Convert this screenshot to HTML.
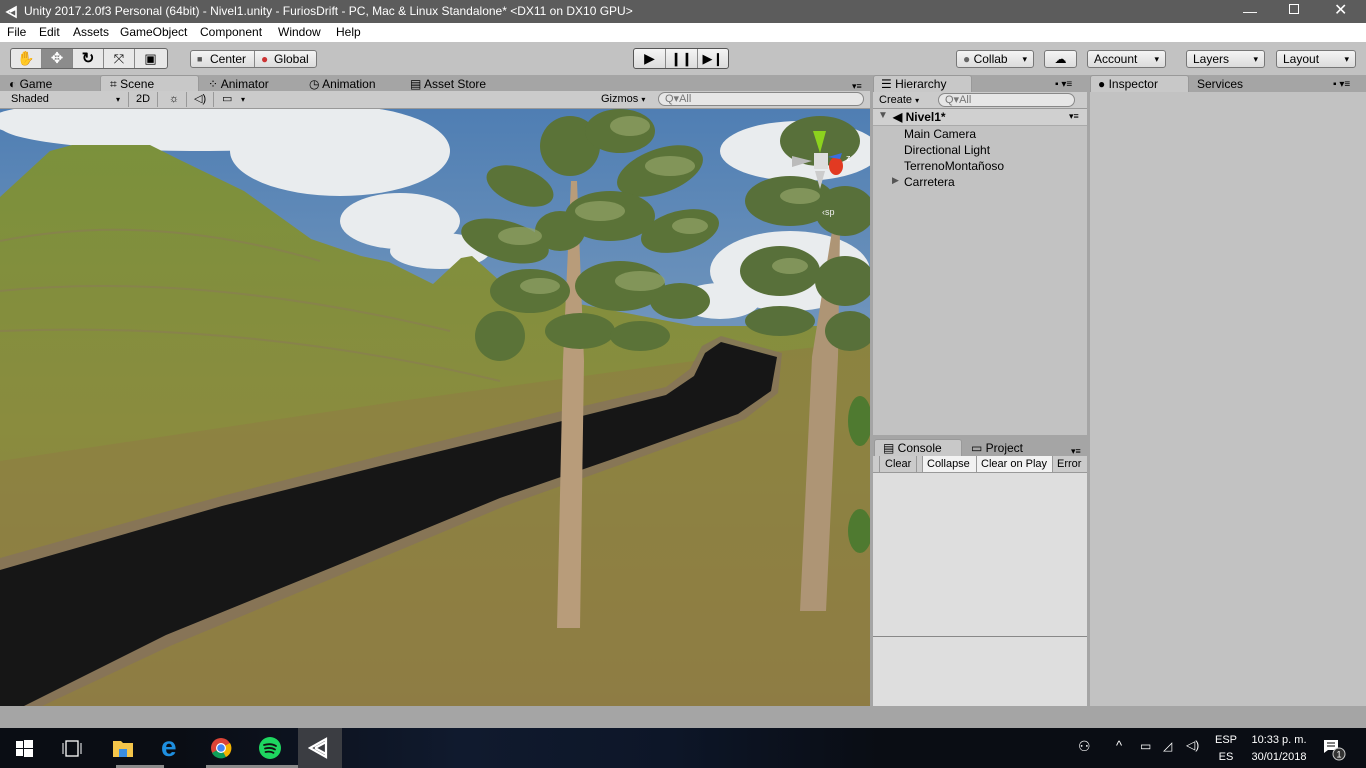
<!DOCTYPE html>
<html><head><meta charset="utf-8"><style>
*{box-sizing:border-box;margin:0;padding:0}
body{width:1366px;height:768px;overflow:hidden;position:relative;font-family:"Liberation Sans",sans-serif;font-size:12px;color:#000;background:#a5a5a5}
.abs{position:absolute}
.btn{position:absolute;border:1px solid #777;border-radius:3px;background:linear-gradient(#f4f4f4,#dcdcdc);font-size:12px;line-height:17px;padding-left:6px}
.tab{position:absolute;font-size:12px;line-height:16px}
.dd::after{content:"▾";position:absolute;right:6px;font-size:9px}
</style></head><body>
<!-- title -->
<div class="abs" style="left:0;top:0;width:1366px;height:23px;background:#5c5c5c;color:#fff;font-size:12px;line-height:23px;padding-left:24px">Unity 2017.2.0f3 Personal (64bit) - Nivel1.unity - FuriosDrift - PC, Mac &amp; Linux Standalone* &lt;DX11 on DX10 GPU&gt;</div>
<svg class="abs" style="left:5px;top:5px" width="14" height="14" viewBox="0 0 14 14"><path d="M2 7 L11 2 L11 12 Z M5 7 L11 4" stroke="#fff" stroke-width="1.6" fill="none"/></svg>
<div class="abs" style="left:1243px;top:0;color:#fff;font-size:14px;line-height:22px">—</div>
<div class="abs" style="left:1289px;top:4px;width:10px;height:10px;border:1px solid #fff"></div>
<div class="abs" style="left:1334px;top:0;color:#fff;font-size:16px;line-height:22px">✕</div>
<!-- menu -->
<div class="abs" style="left:0;top:23px;width:1366px;height:19px;background:#fff;font-size:12px;line-height:19px">
<span class="abs" style="left:7px">File</span><span class="abs" style="left:39px">Edit</span><span class="abs" style="left:73px">Assets</span><span class="abs" style="left:120px">GameObject</span><span class="abs" style="left:200px">Component</span><span class="abs" style="left:278px">Window</span><span class="abs" style="left:336px">Help</span></div>
<!-- toolbar -->
<div class="abs" style="left:0;top:42px;width:1366px;height:33px;background:#c2c2c2"></div>
<div class="abs" style="left:10px;top:48px;width:158px;height:21px;border:1px solid #666;border-radius:3px;background:#e8e8e8;display:flex">
<div style="width:31px;border-right:1px solid #888;text-align:center;line-height:19px;font-size:14px">✋</div>
<div style="width:31px;border-right:1px solid #888;background:#8c8c8c;text-align:center;line-height:19px;font-size:15px;color:#fff">✥</div>
<div style="width:31px;border-right:1px solid #888;text-align:center;line-height:19px;font-size:15px;font-weight:bold">↻</div>
<div style="width:31px;border-right:1px solid #888;text-align:center;line-height:19px;font-size:13px">⤧</div>
<div style="width:31px;text-align:center;line-height:19px;font-size:13px">▣</div></div>
<div class="abs" style="left:190px;top:50px;width:127px;height:18px;border:1px solid #777;border-radius:3px;background:linear-gradient(#f4f4f4,#dcdcdc);font-size:12px;line-height:16px">
<span class="abs" style="left:6px;color:#555;font-size:9px">■</span><span class="abs" style="left:19px">Center</span><span class="abs" style="left:63px;top:0;width:1px;height:16px;background:#888"></span><span class="abs" style="left:70px;color:#c33">●</span><span class="abs" style="left:83px">Global</span></div>
<div class="abs" style="left:633px;top:48px;width:96px;height:21px;border:1px solid #555;border-radius:3px;background:linear-gradient(#f4f4f4,#dcdcdc);display:flex">
<div style="width:32px;border-right:1px solid #888;text-align:center;line-height:19px;font-size:14px">▶</div>
<div style="width:32px;border-right:1px solid #888;text-align:center;line-height:19px;font-size:13px;font-weight:bold">❙❙</div>
<div style="width:30px;text-align:center;line-height:19px;font-size:13px">▶❙</div></div>
<div class="btn dd" style="left:956px;top:50px;width:78px;height:18px"><span style="color:#666">●</span> Collab</div>
<div class="btn" style="left:1044px;top:50px;width:33px;height:18px;text-align:center;padding:0">☁</div>
<div class="btn dd" style="left:1087px;top:50px;width:79px;height:18px">Account</div>
<div class="btn dd" style="left:1186px;top:50px;width:79px;height:18px">Layers</div>
<div class="btn dd" style="left:1276px;top:50px;width:80px;height:18px">Layout</div>
<!-- scene tabs -->
<div class="abs" style="left:0;top:75px;width:870px;height:16px;background:#a5a5a5"></div>
<div class="tab" style="left:9px;top:76px">◐ Game</div>
<div class="abs" style="left:100px;top:75px;width:99px;height:17px;background:#c8c8c8;border:1px solid #999;border-bottom:none;border-radius:3px 3px 0 0"></div>
<div class="tab" style="left:110px;top:76px">⌗ Scene</div>
<div class="tab" style="left:208px;top:76px">⁘ Animator</div>
<div class="tab" style="left:309px;top:76px">◷ Animation</div>
<div class="tab" style="left:410px;top:76px">▤ Asset Store</div>
<div class="tab" style="left:852px;top:78px;font-size:9px">▾≡</div>
<div class="abs" style="left:0;top:91px;width:870px;height:18px;background:#cbcbcb;border-bottom:1px solid #999;font-size:11px;line-height:17px">
<span class="abs" style="left:11px">Shaded</span><span class="abs" style="left:116px;font-size:8px">▾</span><span class="abs" style="left:128px;top:1px;width:1px;height:15px;background:#999"></span><span class="abs" style="left:136px">2D</span><span class="abs" style="left:157px;top:1px;width:1px;height:15px;background:#999"></span><span class="abs" style="left:169px">☼</span><span class="abs" style="left:186px;top:1px;width:1px;height:15px;background:#999"></span><span class="abs" style="left:194px">◁)</span><span class="abs" style="left:213px;top:1px;width:1px;height:15px;background:#999"></span><span class="abs" style="left:222px">▭</span><span class="abs" style="left:241px;font-size:8px">▾</span>
<span class="abs" style="left:601px">Gizmos <span style="font-size:8px">▾</span></span>
<span class="abs" style="left:658px;top:1px;width:206px;height:14px;border:1px solid #888;border-radius:8px;background:#e6e6e6;line-height:12px;padding-left:6px;color:#777">Q▾All</span></div>
<!-- scene -->
<svg class="abs" style="left:0;top:109px" width="870" height="597" viewBox="0 108 870 597">
<defs>
<linearGradient id="sky" x1="0" y1="0" x2="0" y2="1"><stop offset="0" stop-color="#4f7eb3"/><stop offset="1" stop-color="#a8bccc"/></linearGradient>
<linearGradient id="hill" x1="0" y1="0" x2="0" y2="1"><stop offset="0" stop-color="#7b913c"/><stop offset="0.5" stop-color="#8a8c3e"/><stop offset="1" stop-color="#8d7d45"/></linearGradient>
</defs>
<rect x="0" y="108" width="870" height="597" fill="url(#sky)"/>
<g fill="#e9ecee">
<ellipse cx="200" cy="125" rx="200" ry="25"/><ellipse cx="340" cy="150" rx="110" ry="45"/><ellipse cx="400" cy="220" rx="60" ry="28"/><ellipse cx="440" cy="250" rx="50" ry="18"/><ellipse cx="800" cy="150" rx="80" ry="30"/><ellipse cx="790" cy="270" rx="80" ry="40"/><ellipse cx="720" cy="300" rx="40" ry="18"/><ellipse cx="40" cy="120" rx="50" ry="14"/>
</g>
<path d="M0 196 L50 150 L72 144 L150 144 L178 158 L244 190 L311 238 L361 255 L389 261 L433 283 L461 257 L472 255 L511 290 L694 325 L870 325 L870 705 L0 705 Z" fill="url(#hill)"/>
<path d="M0 240 Q150 210 320 260 M0 290 Q200 270 450 330 M0 330 Q250 320 500 380" stroke="#8b7c55" stroke-width="2" fill="none" opacity="0.6"/>
<path d="M0 460 L400 400 L694 360 L870 340 L870 705 L0 705Z" fill="#8f7c44" opacity="0.55"/>
<path d="M0 557 L222 495 L388 453 L566 409 L666 386 L690 368 L702 345 L721 335 L782 352 L778 392 L745 418 L614 466 L505 505 L338 575 L170 645 L40 706 L0 706Z" fill="#857060" opacity="0.7"/>
<path d="M0 569 L222 505 L388 463 L566 419 L666 394 L694 375 L705 352 L721 341 L777 356 L771 390 L738 413 L610 459 L500 497 L333 566 L166 634 L22 706 L0 706Z" fill="#161616"/>
<!-- tree 1 trunk -->
<path d="M557 627 L563 360 L571 180 L577 180 L584 360 L580 627Z" fill="#b89c7a"/>
<!-- tree 1 foliage -->
<g fill="#5b7338">
<ellipse cx="570" cy="145" rx="30" ry="30"/><ellipse cx="620" cy="130" rx="35" ry="22"/><ellipse cx="660" cy="170" rx="45" ry="22" transform="rotate(-20 660 170)"/><ellipse cx="520" cy="185" rx="35" ry="18" transform="rotate(20 520 185)"/>
<ellipse cx="610" cy="215" rx="45" ry="25"/><ellipse cx="680" cy="230" rx="40" ry="20" transform="rotate(-15 680 230)"/><ellipse cx="505" cy="240" rx="45" ry="20" transform="rotate(15 505 240)"/><ellipse cx="560" cy="230" rx="25" ry="20"/>
<ellipse cx="530" cy="290" rx="40" ry="22"/><ellipse cx="620" cy="285" rx="45" ry="25"/><ellipse cx="680" cy="300" rx="30" ry="18"/><ellipse cx="500" cy="335" rx="25" ry="25"/><ellipse cx="580" cy="330" rx="35" ry="18"/><ellipse cx="640" cy="335" rx="30" ry="15"/>
</g>
<g fill="#93a468" opacity="0.7">
<ellipse cx="630" cy="125" rx="20" ry="10"/><ellipse cx="670" cy="165" rx="25" ry="10"/><ellipse cx="600" cy="210" rx="25" ry="10"/><ellipse cx="520" cy="235" rx="22" ry="9"/><ellipse cx="640" cy="280" rx="25" ry="10"/><ellipse cx="540" cy="285" rx="20" ry="8"/><ellipse cx="690" cy="225" rx="18" ry="8"/>
</g>
<!-- tree 2 -->
<path d="M800 610 L812 356 L832 230 L840 230 L838 356 L826 610Z" fill="#ae9575"/>
<g fill="#58703a"><ellipse cx="820" cy="140" rx="40" ry="25"/><ellipse cx="790" cy="200" rx="45" ry="25"/><ellipse cx="845" cy="210" rx="30" ry="25"/><ellipse cx="780" cy="270" rx="40" ry="25"/><ellipse cx="845" cy="280" rx="30" ry="25"/><ellipse cx="780" cy="320" rx="35" ry="15"/><ellipse cx="850" cy="330" rx="25" ry="20"/><ellipse cx="860" cy="420" rx="12" ry="25" fill="#4f7a30"/><ellipse cx="860" cy="530" rx="12" ry="22" fill="#4f7a30"/></g>
<g fill="#93a468" opacity="0.7"><ellipse cx="800" cy="195" rx="20" ry="8"/><ellipse cx="790" cy="265" rx="18" ry="8"/></g>
<!-- gizmo -->
<path d="M813 130 L826 130 L820 152Z" fill="#8cd21e"/>
<rect x="814" y="152" width="14" height="16" fill="#ddd"/>
<path d="M792 155 L812 160 L792 166Z" fill="#bbb"/>
<path d="M815 170 L825 170 L820 188Z" fill="#ccc"/>
<ellipse cx="836" cy="165" rx="7" ry="9" fill="#e23a22"/>
<path d="M828 156 L842 152 L840 158Z" fill="#3a6ee0"/>
<text x="846" y="160" font-size="9" fill="#fff" font-family="Liberation Sans">z</text>
<text x="822" y="214" font-size="9" fill="#eee" font-family="Liberation Sans">‹sp</text>
</svg>
<!-- hierarchy -->
<div class="abs" style="left:870px;top:75px;width:3px;height:631px;background:#a5a5a5"></div>
<div class="abs" style="left:873px;top:75px;width:99px;height:17px;background:#c8c8c8;border:1px solid #999;border-bottom:none;border-radius:3px 3px 0 0"></div>
<div class="tab" style="left:881px;top:76px">☰ Hierarchy</div>
<div class="tab" style="left:1055px;top:77px;font-size:10px">▪ ▾≡</div>
<div class="abs" style="left:873px;top:92px;width:214px;height:17px;background:#cbcbcb;border-bottom:1px solid #999;font-size:11px;line-height:16px"><span class="abs" style="left:6px">Create <span style="font-size:8px">▾</span></span><span class="abs" style="left:65px;top:1px;width:137px;height:14px;border:1px solid #888;border-radius:8px;background:#e6e6e6;line-height:12px;padding-left:6px;color:#777">Q▾All</span></div>
<div class="abs" style="left:873px;top:109px;width:214px;height:326px;background:#c2c2c2;font-size:12px">
<div class="abs" style="left:0;top:0;width:214px;height:17px;background:#d0d0d0;border-bottom:1px solid #aaa"></div>
<span class="abs" style="left:5px;top:1px;font-size:10px;color:#555">▼</span><span class="abs" style="left:20px;top:1px;font-weight:bold">◀ Nivel1*</span><span class="abs" style="left:196px;top:2px;font-size:9px">▾≡</span>
<span class="abs" style="left:31px;top:18px">Main Camera</span>
<span class="abs" style="left:31px;top:34px">Directional Light</span>
<span class="abs" style="left:31px;top:50px">TerrenoMontañoso</span>
<span class="abs" style="left:19px;top:66px;font-size:9px;color:#555">▶</span><span class="abs" style="left:31px;top:66px">Carretera</span></div>
<div class="abs" style="left:1087px;top:75px;width:3px;height:631px;background:#a5a5a5"></div>
<!-- console -->
<div class="abs" style="left:873px;top:435px;width:214px;height:4px;background:#a5a5a5"></div>
<div class="abs" style="left:873px;top:439px;width:214px;height:17px;background:#a5a5a5"></div>
<div class="abs" style="left:874px;top:439px;width:88px;height:17px;background:#c8c8c8;border:1px solid #999;border-bottom:none;border-radius:3px 3px 0 0"></div>
<div class="tab" style="left:883px;top:440px">▤ Console</div>
<div class="tab" style="left:971px;top:440px">▭ Project</div>
<div class="tab" style="left:1071px;top:443px;font-size:9px">▾≡</div>
<div class="abs" style="left:873px;top:456px;width:214px;height:17px;background:#cbcbcb;border-bottom:1px solid #999;font-size:11px;line-height:16px">
<span class="abs" style="left:6px;top:0;width:38px;height:16px;border-left:1px solid #999;border-right:1px solid #999;padding-left:5px">Clear</span>
<span class="abs" style="left:49px;top:0;width:55px;height:16px;background:#f2f2f2;border-left:1px solid #999;border-right:1px solid #999;padding-left:4px">Collapse</span>
<span class="abs" style="left:104px;top:0;width:76px;height:16px;background:#f2f2f2;border-right:1px solid #999;padding-left:4px">Clear on Play</span>
<span class="abs" style="left:184px;top:0">Error</span></div>
<div class="abs" style="left:873px;top:473px;width:214px;height:164px;background:#dedede;border-bottom:1px solid #888"></div>
<div class="abs" style="left:873px;top:637px;width:214px;height:69px;background:#dedede"></div>
<!-- inspector -->
<div class="abs" style="left:1090px;top:75px;width:99px;height:17px;background:#c8c8c8;border:1px solid #999;border-bottom:none;border-radius:3px 3px 0 0"></div>
<div class="tab" style="left:1098px;top:76px">● Inspector</div>
<div class="tab" style="left:1197px;top:76px">Services</div>
<div class="tab" style="left:1333px;top:77px;font-size:10px">▪ ▾≡</div>
<div class="abs" style="left:1090px;top:92px;width:276px;height:614px;background:#c2c2c2"></div>
<!-- status -->
<div class="abs" style="left:0;top:706px;width:1366px;height:22px;background:#a5a5a5"></div>
<!-- taskbar -->
<div class="abs" style="left:0;top:728px;width:1366px;height:40px;background:#0a0d14"></div>
<div class="abs" style="left:180px;top:728px;width:700px;height:40px;background:linear-gradient(90deg,#0a0d14,#101a2e 40%,#0d1628 70%,#0a0d14)"></div>
<svg class="abs" style="left:16px;top:740px" width="17" height="17"><rect x="0" y="1" width="7" height="7" fill="#fff"/><rect x="8" y="0" width="9" height="8" fill="#fff"/><rect x="0" y="9" width="7" height="7" fill="#fff"/><rect x="8" y="9" width="9" height="8" fill="#fff"/></svg>
<svg class="abs" style="left:62px;top:740px" width="20" height="17"><rect x="4" y="1" width="12" height="15" fill="none" stroke="#fff" stroke-width="1.3"/><path d="M1 3v11M19 3v11" stroke="#fff"/></svg>
<svg class="abs" style="left:112px;top:737px" width="22" height="22"><path d="M1 4h8l2 2h10v14H1z" fill="#f4c54a"/><rect x="7" y="12" width="8" height="8" fill="#3a8de0"/></svg>
<div class="abs" style="left:116px;top:765px;width:48px;height:3px;background:#8a8a8a"></div>
<div class="abs" style="left:161px;top:731px;color:#1e8fe0;font-size:28px;font-weight:bold;line-height:32px">e</div>
<svg class="abs" style="left:210px;top:737px" width="22" height="22"><circle cx="11" cy="11" r="10" fill="#db4437"/><path d="M11 11 L2 16 A10 10 0 0 0 16 20Z" fill="#0f9d58"/><path d="M11 11 L20 6 A10 10 0 0 1 16 20Z" fill="#f4b400"/><circle cx="11" cy="11" r="5" fill="#fff"/><circle cx="11" cy="11" r="3.8" fill="#4285f4"/></svg>
<div class="abs" style="left:206px;top:765px;width:48px;height:3px;background:#8a8a8a"></div>
<svg class="abs" style="left:258px;top:736px" width="24" height="24"><circle cx="12" cy="12" r="11" fill="#1ed760"/><path d="M6 9q7-2 12 1M7 12.5q6-1.5 10 1M7.5 16q5-1 8 .8" stroke="#111" stroke-width="1.8" fill="none" stroke-linecap="round"/></svg>
<div class="abs" style="left:254px;top:765px;width:48px;height:3px;background:#8a8a8a"></div>
<div class="abs" style="left:298px;top:728px;width:44px;height:40px;background:#3b3d42"></div>
<svg class="abs" style="left:308px;top:737px" width="22" height="22"><path d="M2 11 L18 2 L18 20Z M7 11 L18 5 M7 11 L18 17" stroke="#fff" stroke-width="2.2" fill="none"/></svg>
<div class="abs" style="left:1078px;top:738px;color:#fff;font-size:14px">⚇</div>
<div class="abs" style="left:1116px;top:738px;color:#fff;font-size:13px">^</div>
<div class="abs" style="left:1140px;top:739px;color:#fff;font-size:12px">▭</div>
<div class="abs" style="left:1163px;top:739px;color:#fff;font-size:12px">◿</div>
<div class="abs" style="left:1186px;top:738px;color:#fff;font-size:12px">◁)</div>
<div class="abs" style="left:1215px;top:732px;color:#fff;font-size:11px;text-align:center;line-height:17px">ESP<br>ES</div>
<div class="abs" style="left:1248px;top:732px;color:#fff;font-size:11px;text-align:center;line-height:17px;width:62px">10:33 p. m.<br>30/01/2018</div>
<svg class="abs" style="left:1322px;top:738px" width="26" height="24"><path d="M2 2h14v10H6l-4 3z" fill="#fff"/><path d="M5 5h8M5 8h8" stroke="#000"/><circle cx="17" cy="16" r="6" fill="#333" stroke="#ccc"/><text x="14.5" y="19.5" font-size="9" fill="#fff" font-family="Liberation Sans">1</text></svg>
</body></html>
